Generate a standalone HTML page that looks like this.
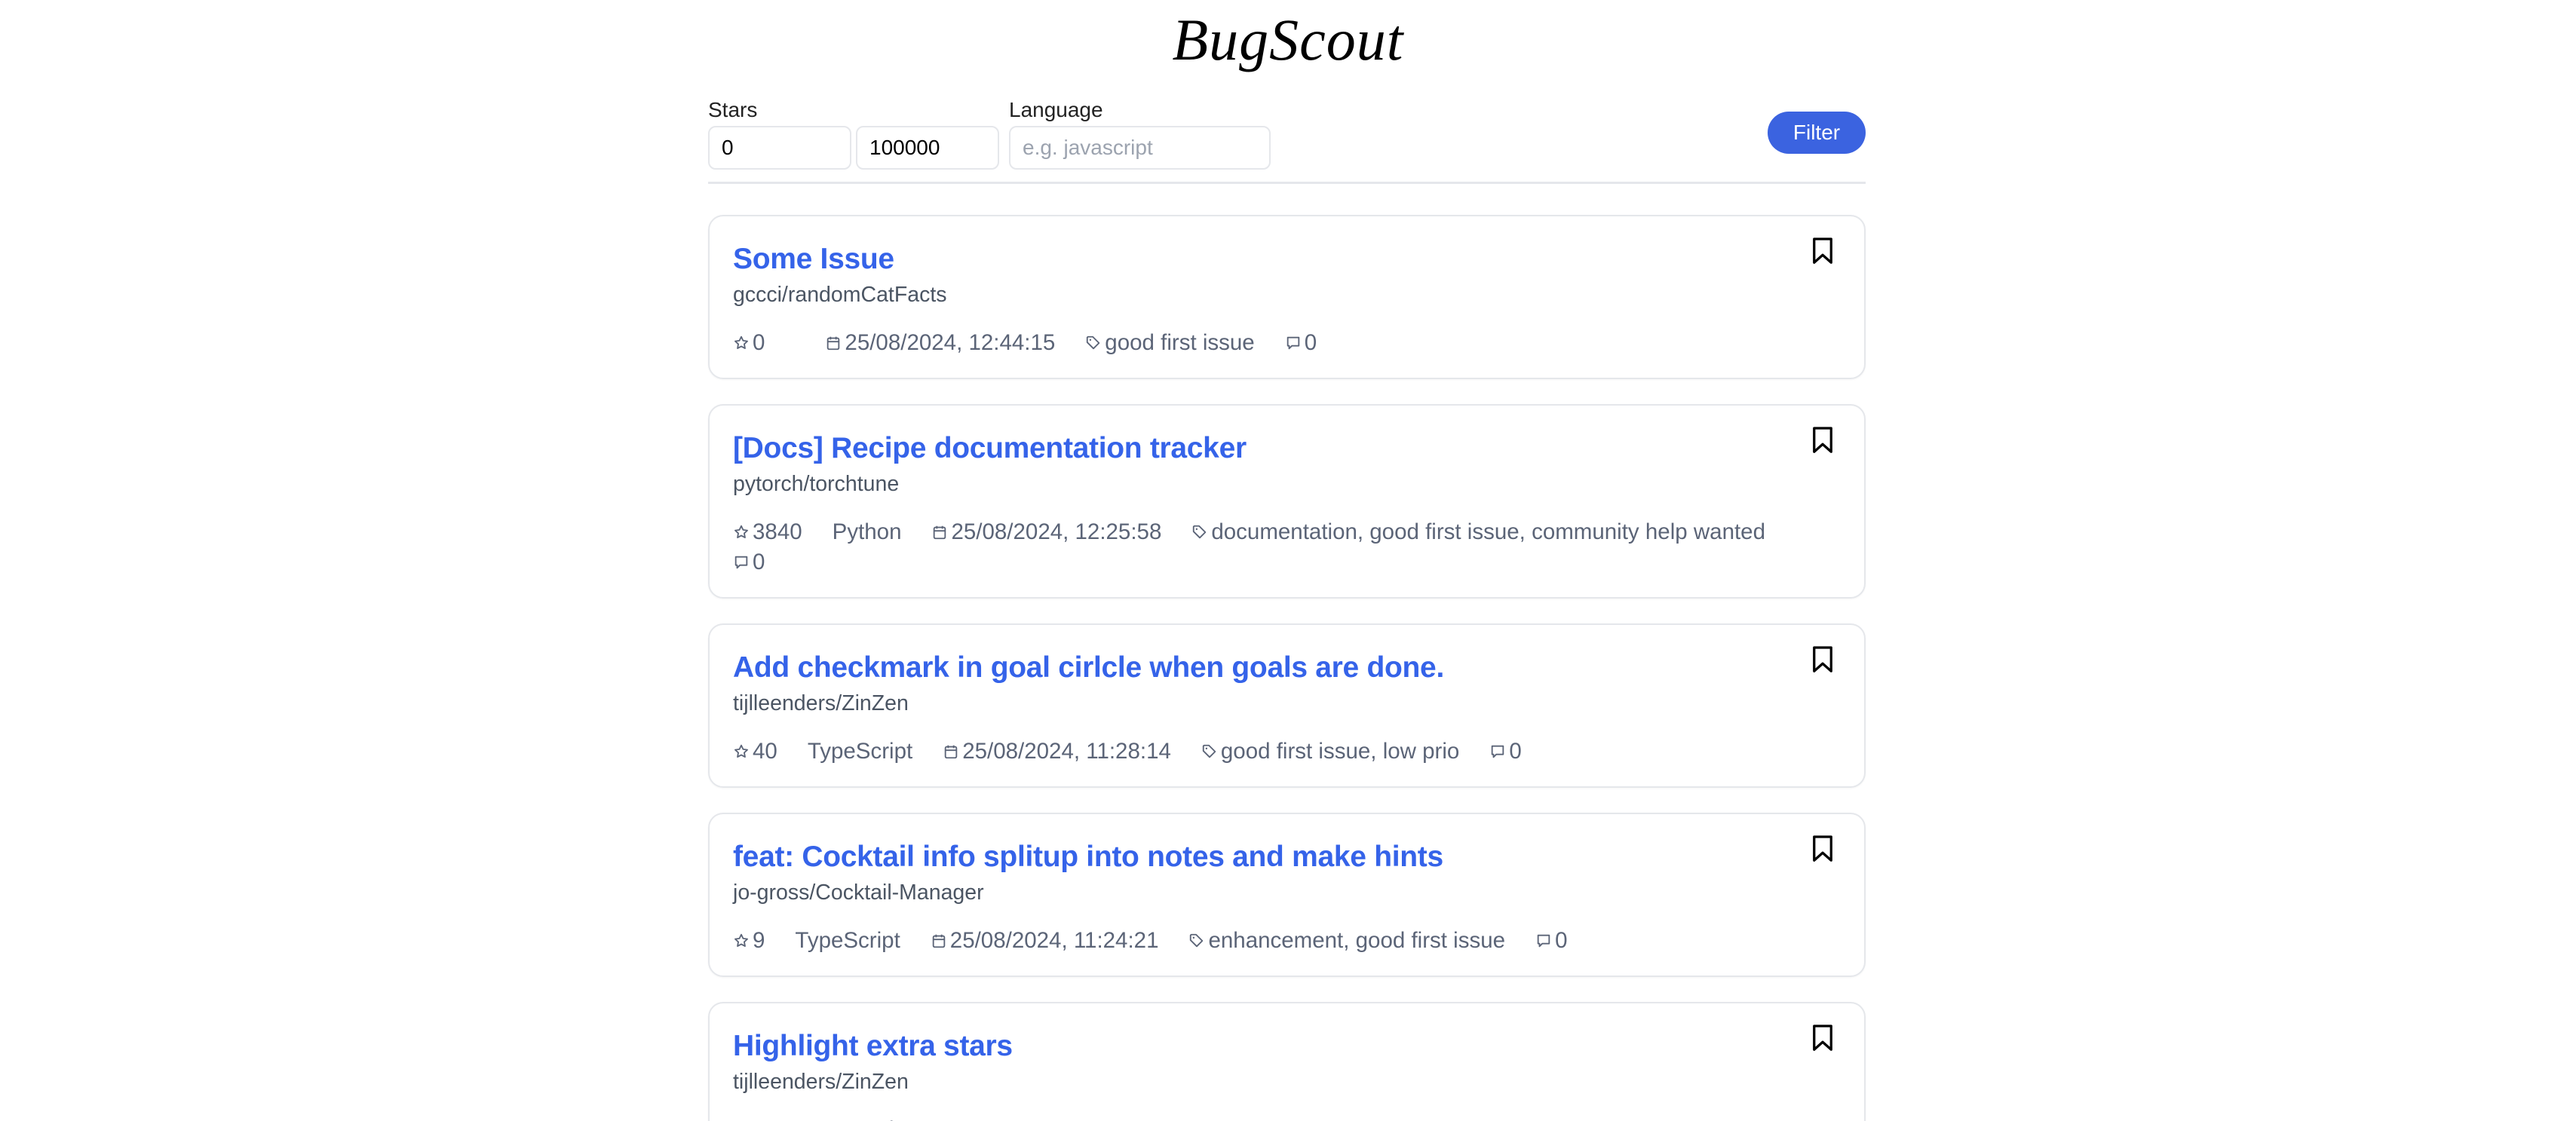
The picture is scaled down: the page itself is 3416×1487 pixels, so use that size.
<!DOCTYPE html>
<html style="height:1487px;overflow:hidden"><head><meta charset="utf-8"><style>
*{box-sizing:border-box;margin:0;padding:0}
body{width:3416px;height:1487px;overflow:hidden;background:#fff;font-family:"Liberation Sans",sans-serif;position:relative}
.logo{position:absolute;left:0;width:3416px;top:8px;text-align:center;font-family:"Liberation Serif",serif;font-style:italic;font-size:78px;color:#000;letter-spacing:1px}
.lbl{position:absolute;top:130px;font-size:28px;color:#222}
.inp{position:absolute;top:167px;height:58px;border:2px solid #e5e7eb;border-radius:10px;font-size:28px;padding-left:16px;line-height:54px;color:#000}
.btn{position:absolute;left:2344px;top:148px;width:130px;height:56px;border-radius:28px;background:#3b63e0;color:#fff;font-size:28px;text-align:center;line-height:56px}
.hr{position:absolute;left:939px;width:1535px;top:241px;height:3px;background:#e5e7eb}
.cards{position:absolute;left:939px;top:285px;width:1535px}
.card{border:2px solid #e5e7eb;border-radius:20px;padding:33px 31px 26px;margin-bottom:33px;position:relative;box-shadow:0 1px 2px rgba(0,0,0,.04)}
.t{font-size:39px;font-weight:bold;color:#3563e9;line-height:48px;letter-spacing:-.3px}
.r{font-size:28.5px;color:#4b5563;line-height:40px;margin-top:3px}
.m{display:flex;flex-wrap:wrap;column-gap:40px;font-size:29.5px;color:#5b6477;line-height:40px;margin-top:24px;width:1400px}
.m span{display:inline-flex;align-items:center;gap:4px}
.m svg{width:22px;height:22px}
.bm{position:absolute;right:40px;top:26px;width:30px;height:38px}
</style></head><body>
<div class="logo">BugScout</div>
<div class="lbl" style="left:939px">Stars</div>
<div class="lbl" style="left:1338px">Language</div>
<div class="inp" style="left:939px;width:190px">0</div>
<div class="inp" style="left:1135px;width:190px">100000</div>
<div class="inp" style="left:1338px;width:347px;color:#9ca3af">e.g. javascript</div>
<div class="btn">Filter</div>
<div class="hr"></div>
<svg width="0" height="0" style="position:absolute"><defs>
<symbol id="st" viewBox="0 0 24 24"><path d="M12 3l2.7 5.6 6.1.8-4.5 4.2 1.1 6.1L12 16.8 6.6 19.7l1.1-6.1L3.2 9.4l6.1-.8z" fill="none" stroke="#5b6477" stroke-width="2" stroke-linejoin="round"/></symbol>
<symbol id="ca" viewBox="0 0 24 24"><rect x="4" y="5" width="16" height="16" rx="2" fill="none" stroke="#5b6477" stroke-width="2"/><path d="M4 10h16M8 3v4M16 3v4" stroke="#5b6477" stroke-width="2"/></symbol>
<symbol id="tg" viewBox="0 0 24 24"><path d="M3 4v7l9 9 8-8-9-9H4z" fill="none" stroke="#5b6477" stroke-width="2" stroke-linejoin="round"/><circle cx="7.5" cy="7.5" r="1.3" fill="#5b6477"/></symbol>
<symbol id="co" viewBox="0 0 24 24"><path d="M4 4h16v12H10l-4 4v-4H4z" fill="none" stroke="#5b6477" stroke-width="2" stroke-linejoin="round"/></symbol>
<symbol id="b" viewBox="0 0 24 30"><path d="M3 3h18v25l-9-8-9 8z" fill="none" stroke="#000" stroke-width="2.6" stroke-linejoin="round"/></symbol>
</defs></svg>
<div class="cards">
<div class="card"><div class="t">Some Issue</div><div class="r">gccci/randomCatFacts</div>
<div class="m"><span><svg><use href="#st"/></svg>0</span><span></span><span><svg><use href="#ca"/></svg>25/08/2024, 12:44:15</span><span><svg><use href="#tg"/></svg>good first issue</span><span><svg><use href="#co"/></svg>0</span></div><svg class="bm"><use href="#b"/></svg></div>
<div class="card"><div class="t">[Docs] Recipe documentation tracker</div><div class="r">pytorch/torchtune</div>
<div class="m"><span><svg><use href="#st"/></svg>3840</span><span>Python</span><span><svg><use href="#ca"/></svg>25/08/2024, 12:25:58</span><span><svg><use href="#tg"/></svg>documentation, good first issue, community help wanted</span><span><svg><use href="#co"/></svg>0</span></div><svg class="bm"><use href="#b"/></svg></div>
<div class="card"><div class="t">Add checkmark in goal cirlcle when goals are done.</div><div class="r">tijlleenders/ZinZen</div>
<div class="m"><span><svg><use href="#st"/></svg>40</span><span>TypeScript</span><span><svg><use href="#ca"/></svg>25/08/2024, 11:28:14</span><span><svg><use href="#tg"/></svg>good first issue, low prio</span><span><svg><use href="#co"/></svg>0</span></div><svg class="bm"><use href="#b"/></svg></div>
<div class="card"><div class="t">feat: Cocktail info splitup into notes and make hints</div><div class="r">jo-gross/Cocktail-Manager</div>
<div class="m"><span><svg><use href="#st"/></svg>9</span><span>TypeScript</span><span><svg><use href="#ca"/></svg>25/08/2024, 11:24:21</span><span><svg><use href="#tg"/></svg>enhancement, good first issue</span><span><svg><use href="#co"/></svg>0</span></div><svg class="bm"><use href="#b"/></svg></div>
<div class="card"><div class="t">Highlight extra stars</div><div class="r">tijlleenders/ZinZen</div>
<div class="m"><span><svg><use href="#st"/></svg>40</span><span>TypeScript</span></div><svg class="bm"><use href="#b"/></svg></div>
</div>
</body></html>
